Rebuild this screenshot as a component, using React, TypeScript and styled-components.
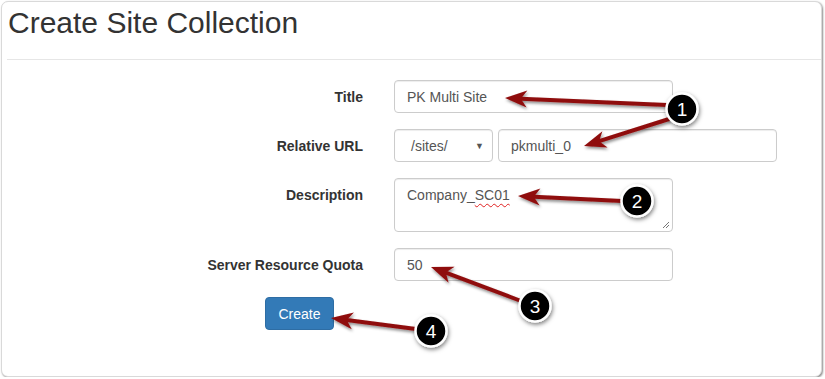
import React from "react";
import styled, { createGlobalStyle } from "styled-components";

const Global = createGlobalStyle`
  html, body { margin: 0; padding: 0; background: #ffffff; }
  body { font-family: "Liberation Sans", Arial, Helvetica, sans-serif; color: #333; }
  * { box-sizing: border-box; }
`;

const Panel = styled.div`
  position: relative;
  margin: 1px 0 0 1px;
  width: 821px;
  height: 376px;
  background: #fff;
  border: 1px solid #d9d9d9;
  border-radius: 7px;
  box-shadow: 1px 1px 2px rgba(0, 0, 0, 0.45);
  overflow: hidden;
`;

const Title = styled.h1`
  margin: 4px 0 0 6px;
  font-size: 30px;
  line-height: 33px;
  font-weight: 400;
  color: #333;
`;

const Divider = styled.hr`
  margin: 20px 0 0 5px;
  border: 0;
  border-top: 1px solid #e6e6e6;
`;

const Form = styled.form`
  display: flex;
  flex-direction: column;
  gap: 16px;
  margin-top: 20px;
`;

const Row = styled.div`
  display: flex;
  align-items: flex-start;
  gap: 31px;
`;

const Label = styled.label`
  width: 361px;
  flex: none;
  text-align: right;
  font-weight: 700;
  font-size: 14px;
  line-height: 20px;
  padding-top: 7px;
  color: #333;
`;

const Controls = styled.div`
  display: flex;
  gap: 5px;
`;

const Field = styled.div<{ $w?: number; $h?: number }>`
  width: ${(p) => p.$w ?? 279}px;
  height: ${(p) => p.$h ?? 33}px;
  border: 1px solid #ccc;
  border-radius: 4px;
  box-shadow: inset 0 1px 1px rgba(0, 0, 0, 0.075);
  padding: 6px 12px;
  font-size: 14px;
  line-height: 20px;
  color: #555;
  background: #fff;
  position: relative;
  display: flex;
  align-items: flex-start;
`;

const SelectField = styled(Field)`
  padding: 6px 8px 6px 16px;
  justify-content: space-between;
`;

const Caret = styled.span`
  font-size: 9px;
  line-height: 20px;
  color: #555;
`;

const Misspelled = styled.span`
  text-decoration: underline wavy #e02020;
  text-decoration-thickness: 1px;
  text-underline-offset: 3px;
`;

const Grip = styled.svg`
  position: absolute;
  right: 2px;
  bottom: 2px;
`;

const ButtonRow = styled.div`
  padding-left: 263px;
`;

const Button = styled.button`
  width: 69px;
  height: 33px;
  background: #337ab7;
  border: 1px solid #2e6da4;
  border-radius: 4px;
  color: #fff;
  font-family: "Liberation Sans", Arial, sans-serif;
  font-size: 14px;
  line-height: 20px;
  padding: 0;
`;

const Overlay = styled.svg`
  position: absolute;
  left: -1px;
  top: -1px;
  pointer-events: none;
`;

type Pt = [number, number];

const RED = "#8f0c0c";

function Arrow({ from, to }: { from: Pt; to: Pt }) {
  const dx = to[0] - from[0];
  const dy = to[1] - from[1];
  const len = Math.hypot(dx, dy);
  const ux = dx / len;
  const uy = dy / len;
  const nx = -uy;
  const ny = ux;
  const L = 22;
  const W = 8.5;
  const bx = to[0] - ux * L;
  const by = to[1] - uy * L;
  const nxp = to[0] - ux * L * 0.72;
  const nyp = to[1] - uy * L * 0.72;
  const pts = [
    `${to[0]},${to[1]}`,
    `${bx + nx * W},${by + ny * W}`,
    `${nxp},${nyp}`,
    `${bx - nx * W},${by - ny * W}`,
  ].join(" ");
  return (
    <g filter="url(#sh)">
      <line
        x1={from[0]}
        y1={from[1]}
        x2={nxp}
        y2={nyp}
        stroke={RED}
        strokeWidth={4}
        strokeLinecap="round"
      />
      <polygon points={pts} fill={RED} />
    </g>
  );
}

function Badge({ at, n }: { at: Pt; n: number }) {
  return (
    <g>
      <circle cx={at[0]} cy={at[1]} r={15.5} fill="#000" stroke="#fff" strokeWidth={2.5} filter="url(#sh2)" />
      <text
        x={at[0]}
        y={at[1] + 6.5}
        textAnchor="middle"
        fill="#fff"
        fontFamily="'Liberation Sans', Arial, sans-serif"
        fontSize="19"
      >
        {n}
      </text>
    </g>
  );
}

export default function App() {
  return (
    <>
      <Global />
      <Panel>
        <Title>Create Site Collection</Title>
        <Divider />
        <Form>
          <Row>
            <Label>Title</Label>
            <Field>PK Multi Site</Field>
          </Row>
          <Row>
            <Label>Relative URL</Label>
            <Controls>
              <SelectField $w={99}>
                <span>/sites/</span>
                <Caret>▼</Caret>
              </SelectField>
              <Field>pkmulti_0</Field>
            </Controls>
          </Row>
          <Row>
            <Label>Description</Label>
            <Field $h={54}>
              <span>
                Company_<Misspelled>SC01</Misspelled>
              </span>
              <Grip width="8" height="8" viewBox="0 0 8 8">
                <path d="M7 1 L1 7 M7 4 L4 7" stroke="#777" strokeWidth="1" />
              </Grip>
            </Field>
          </Row>
          <Row>
            <Label>Server Resource Quota</Label>
            <Field>50</Field>
          </Row>
          <ButtonRow>
            <Button type="button">Create</Button>
          </ButtonRow>
        </Form>
        <Overlay width="825" height="379" viewBox="0 0 825 379">
          <defs>
            <filter id="sh" x="-20%" y="-50%" width="140%" height="200%">
              <feDropShadow dx="1" dy="2" stdDeviation="1.5" floodColor="#000" floodOpacity="0.45" />
            </filter>
            <filter id="sh2" x="-50%" y="-50%" width="200%" height="200%">
              <feDropShadow dx="1" dy="2" stdDeviation="2" floodColor="#000" floodOpacity="0.5" />
            </filter>
          </defs>
          <Arrow from={[666, 104]} to={[504, 97]} />
          <Arrow from={[668, 118]} to={[583, 145]} />
          <Arrow from={[621, 200]} to={[517, 195]} />
          <Arrow from={[520, 300]} to={[430, 266]} />
          <Arrow from={[415, 328]} to={[330, 317]} />
          <Badge at={[681, 108]} n={1} />
          <Badge at={[636, 200]} n={2} />
          <Badge at={[534, 305]} n={3} />
          <Badge at={[430, 330]} n={4} />
        </Overlay>
      </Panel>
    </>
  );
}
